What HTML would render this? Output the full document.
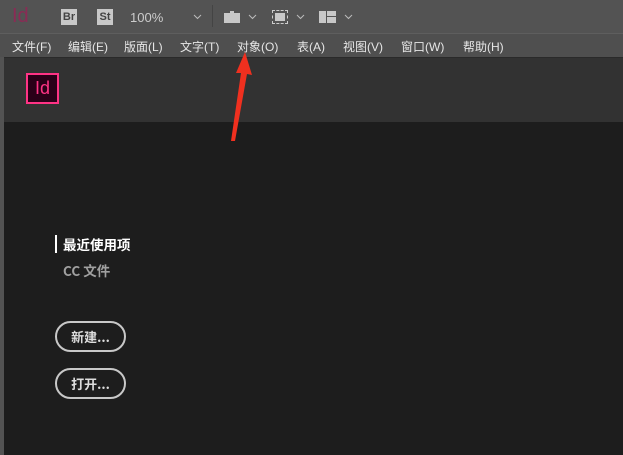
<!DOCTYPE html>
<html><head><meta charset="utf-8"><style>
*{margin:0;padding:0;box-sizing:border-box}
body{width:623px;height:455px;overflow:hidden;background:#535353;font-family:"Liberation Sans","Microsoft YaHei","Noto Sans CJK SC",sans-serif;position:relative}
.top{position:absolute;left:0;top:0;width:623px;height:33px;background:#535353}
.menu{position:absolute;left:0;top:33px;width:623px;height:24px;background:#4f4f4f;color:#e6e6e6;font-size:12px;border-top:1px solid #5e5e5e}
.menu span{position:absolute;top:4px}
.head{position:absolute;left:4px;top:57px;width:619px;height:65px;background:#323232;border-top:1px solid #2a2a2a}
.main{position:absolute;left:4px;top:122px;width:619px;height:333px;background:#1d1d1d}
.bx{position:absolute;background:#c8c8c8;color:#444;font-size:11px;font-weight:bold;text-align:center;line-height:16px;width:16px;height:16px;top:9px}
.btn{position:absolute;left:55px;width:71px;height:31px;border:2px solid #c8c8c8;border-radius:16px;color:#ddd;font-size:13px;font-weight:bold;text-align:center;line-height:27px;font-family:"Noto Sans CJK SC",sans-serif}
</style></head><body>
<div class="top">
<div style="position:absolute;left:12px;top:6px;color:#8a2b55;font-size:20px;line-height:20px;font-family:'Liberation Sans',sans-serif">Id</div>
<div class="bx" style="left:61px">Br</div>
<div class="bx" style="left:97px">St</div>
<div style="position:absolute;left:130px;top:10px;color:#ccc;font-size:13px">100%</div>
<div style="position:absolute;left:212px;top:5px;width:1px;height:22px;background:#444"></div>
<div style="position:absolute;left:224px;top:11px;width:16px;height:12px;background:#c8c8c8;border-top:2px dashed #535353"></div>
<div style="position:absolute;left:272px;top:10px;width:16px;height:14px;border:1px dashed #ccc"><div style="margin:2px;height:8px;background:#c8c8c8"></div></div>
<div style="position:absolute;left:319px;top:11px;width:7px;height:12px;background:#c8c8c8"></div>
<div style="position:absolute;left:327px;top:11px;width:9px;height:5px;background:#c8c8c8"></div>
<div style="position:absolute;left:327px;top:17px;width:9px;height:6px;background:#c8c8c8"></div>
<svg style="position:absolute;left:0;top:0" width="623" height="33" fill="none" stroke="#bbb" stroke-width="1"><path d="M194 15l3.5 3.5 3.5-3.5M249 15l3.5 3.5 3.5-3.5M297 15l3.5 3.5 3.5-3.5M345 15l3.5 3.5 3.5-3.5"/></svg>
</div>
<div class="menu">
<span style="left:12px">文件(F)</span><span style="left:68px">编辑(E)</span><span style="left:124px">版面(L)</span><span style="left:180px">文字(T)</span><span style="left:237px">对象(O)</span><span style="left:297px">表(A)</span><span style="left:343px">视图(V)</span><span style="left:401px">窗口(W)</span><span style="left:463px">帮助(H)</span>
</div>
<div class="head">
<div style="position:absolute;left:22px;top:15px;width:33px;height:31px;border:2px solid #ff3385;background:#2a0018;color:#ff3385;font-size:18px;text-align:center;line-height:27px">Id</div>
</div>
<div class="main">
<div style="position:absolute;left:51px;top:113px;width:2px;height:18px;background:#fff"></div>
<div style="position:absolute;left:59px;top:112px;color:#fff;font-size:13.5px;font-weight:bold;font-family:'Noto Sans CJK SC',sans-serif">最近使用项</div>
<div style="position:absolute;left:59px;top:138px;color:#a0a0a0;font-size:13.5px;font-weight:bold;font-family:'Noto Sans CJK SC',sans-serif">CC 文件</div>
</div>
<div class="btn" style="top:321px">新建...</div>
<div class="btn" style="top:368px">打开...</div>
<svg style="position:absolute;left:0;top:0" width="623" height="455"><polygon points="245,52 252,75 247,74 235,141 231,141 241,73 236,73" fill="#f0301f"/></svg>
</body></html>
